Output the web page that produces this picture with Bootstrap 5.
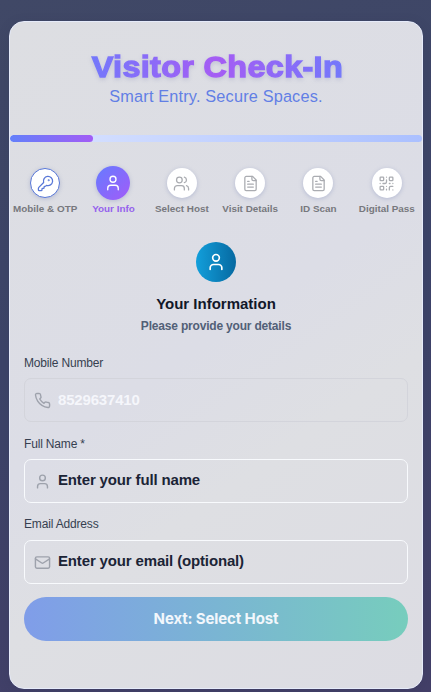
<!DOCTYPE html>
<html lang="en">
<head>
<meta charset="utf-8">
<meta name="viewport" content="width=device-width, initial-scale=1">
<title>Visitor Check-In</title>
<link rel="stylesheet" href="https://cdn.jsdelivr.net/npm/bootstrap@5.3.0/dist/css/bootstrap.min.css">
<style>
body{font-family:"Liberation Sans",Arial,sans-serif;background:linear-gradient(165deg,#404866 0%,#3c4469 45%,#433f68 100%);height:692px;overflow:hidden;padding:21px 8px 3px 9px}
svg{fill:none;stroke:currentColor;stroke-width:2;stroke-linecap:round;stroke-linejoin:round;display:block}
.panel{height:668px;border:1px solid #e6ebfa;border-radius:15px;background:linear-gradient(145deg,#dddee2,#dcdde6 48%,#dedfe3 65%,#dcdce3);box-shadow:0 3px 12px #2b305033}
.title{font-size:30px;line-height:36px;font-weight:700;letter-spacing:.3px;margin-top:27px;padding:0 0 0 2px;transform:scaleX(1.08);background:linear-gradient(90deg,#7378fb,#a55cf4 50%,#7378fb);-webkit-background-clip:text;background-clip:text;color:transparent;-webkit-text-stroke:1.3px transparent;filter:drop-shadow(0 2px 2px #5b60a033)}
.tagline{font-size:16.3px;line-height:24px;color:#627fe5;letter-spacing:.17px;margin-top:-1px}
.track{height:7px;border-radius:4px;margin-top:27px;background:linear-gradient(90deg,#dce5ff,#abc0ff);--bs-progress-bg:transparent}
.track .fillbar{background:linear-gradient(90deg,#6380fa,#a25cf5);border-radius:4px}
.steps{margin:24px 1px 0}
.step{width:68.5px;font-size:9.9px;line-height:12px;font-weight:700;color:#77787d;white-space:nowrap}
.holder{height:34px}
.dot{width:30px;height:30px;border-radius:50%;background:#fff;color:#aaacb1;box-shadow:0 1px 4px #7b88b766}
.dot svg{stroke-width:1.8}
.done .dot{color:#5877d7;border:1px solid #5877d7}
.now{color:#9561ed}
.now .dot{width:34px;height:34px;color:#fff;background:linear-gradient(135deg,#667bff,#a25bf8)}
.step .cap{margin-top:3px}
.hero{width:40px;height:40px;background:linear-gradient(90deg,#129fdb,#0669a1);color:#fff;margin-top:27px}
.heading{font-size:15px;line-height:20px;margin-top:12px;color:#111729}
.sub{font-size:12px;line-height:16px;margin-top:4px;color:#526077;letter-spacing:-.19px}
.fields{padding:0 14px;margin-top:21px}
.lab{font-size:12px;line-height:16px;color:#363f50;margin-bottom:7px;letter-spacing:-.17px}
.lab.tight{margin-top:-1px;margin-bottom:8px}
.box{height:44px;border:1px solid #f8fafd;border-radius:7px;padding-left:9px;gap:7px;color:#9ea2ac;margin-bottom:14px}
.box svg{stroke-width:2}
.box .form-control{font-size:15px;line-height:20px;font-weight:700;color:#1b2436;letter-spacing:-.15px;margin-bottom:2px}
.box .form-control::placeholder{color:#1b2436;opacity:1}
.box.locked{border-color:#d3d4db}
.box .form-control:disabled{color:#f5f6fb;-webkit-text-fill-color:#f5f6fb;background:transparent;letter-spacing:-.18px;margin-bottom:0}
.go{height:44px;border:0;border-radius:22px;background:linear-gradient(90deg,#809de9,#7ab5d3 50%,#77cdbd);color:#f2f7fc;font:700 15px Inter,sans-serif;letter-spacing:-.13px;margin-top:-1px;padding:0 0 1px}
</style>
</head>
<body>
<svg width="0" height="0" class="position-absolute"><defs>
<symbol id="user" viewBox="0 0 24 24"><circle cx="12" cy="7" r="4"/><path d="M19 21v-2a4 4 0 0 0-4-4H9a4 4 0 0 0-4 4v2"/></symbol>
<symbol id="file" viewBox="0 0 24 24"><path d="M15 2H6a2 2 0 0 0-2 2v16a2 2 0 0 0 2 2h12a2 2 0 0 0 2-2V7Z"/><path d="M14 2v4a2 2 0 0 0 2 2h4M10 9H8M16 13H8M16 17H8"/></symbol>
</defs></svg>
<main class="panel d-flex flex-column">
<h1 class="title text-center mb-0 align-self-center">Visitor Check-In</h1>
<p class="tagline text-center mb-0">Smart Entry. Secure Spaces.</p>
<div class="progress track"><div class="progress-bar fillbar" style="width:20.1%"></div></div>
<div class="steps d-flex">
<div class="step done d-flex flex-column align-items-center"><div class="holder d-flex align-items-center"><div class="dot d-flex align-items-center justify-content-center"><svg width="17" height="17" viewBox="0 0 24 24"><path d="M2.586 17.414A2 2 0 0 0 2 18.828V21a1 1 0 0 0 1 1h3a1 1 0 0 0 1-1v-1a1 1 0 0 1 1-1h1a1 1 0 0 0 1-1v-1a1 1 0 0 1 1-1h.172a2 2 0 0 0 1.414-.586l.814-.814a6.5 6.5 0 1 0-4-4z"/><circle cx="16.5" cy="7.5" r=".5"/></svg></div></div><span class="cap">Mobile &amp; OTP</span></div>
<div class="step now d-flex flex-column align-items-center"><div class="holder d-flex align-items-center"><div class="dot d-flex align-items-center justify-content-center"><svg width="18" height="18"><use href="#user"/></svg></div></div><span class="cap">Your Info</span></div>
<div class="step d-flex flex-column align-items-center"><div class="holder d-flex align-items-center"><div class="dot d-flex align-items-center justify-content-center"><svg width="17" height="17" viewBox="0 0 24 24"><circle cx="9" cy="7" r="4"/><path d="M16 21v-2a4 4 0 0 0-4-4H6a4 4 0 0 0-4 4v2M22 21v-2a4 4 0 0 0-3-3.87M16 3.13a4 4 0 0 1 0 7.75"/></svg></div></div><span class="cap">Select Host</span></div>
<div class="step d-flex flex-column align-items-center"><div class="holder d-flex align-items-center"><div class="dot d-flex align-items-center justify-content-center"><svg width="17" height="17"><use href="#file"/></svg></div></div><span class="cap">Visit Details</span></div>
<div class="step d-flex flex-column align-items-center"><div class="holder d-flex align-items-center"><div class="dot d-flex align-items-center justify-content-center"><svg width="17" height="17"><use href="#file"/></svg></div></div><span class="cap">ID Scan</span></div>
<div class="step d-flex flex-column align-items-center"><div class="holder d-flex align-items-center"><div class="dot d-flex align-items-center justify-content-center"><svg width="17" height="17" viewBox="0 0 24 24"><rect width="5" height="5" x="3" y="3" rx="1"/><rect width="5" height="5" x="16" y="3" rx="1"/><rect width="5" height="5" x="3" y="16" rx="1"/><path d="M21 16h-3a2 2 0 0 0-2 2v3M21 21v.01M12 7v3a2 2 0 0 1-2 2H7M3 12h.01M12 3h.01M12 16v.01M16 12h1M21 12v.01M12 21v-1"/></svg></div></div><span class="cap">Digital Pass</span></div>
</div>
<div class="hero rounded-circle align-self-center d-flex align-items-center justify-content-center"><svg width="20" height="20"><use href="#user"/></svg></div>
<h2 class="heading fw-bold text-center mb-0">Your Information</h2>
<p class="sub fw-bold text-center mb-0">Please provide your details</p>
<form class="fields d-flex flex-column">
<label class="lab" for="phone">Mobile Number</label>
<div class="box locked d-flex align-items-center"><svg class="flex-shrink-0" width="17" height="17" viewBox="0 0 24 24"><path d="M22 16.92v3a2 2 0 0 1-2.18 2 19.79 19.79 0 0 1-8.63-3.07 19.5 19.5 0 0 1-6-6 19.79 19.79 0 0 1-3.07-8.67A2 2 0 0 1 4.11 2h3a2 2 0 0 1 2 1.72 12.84 12.84 0 0 0 .7 2.81 2 2 0 0 1-.45 2.11L8.09 9.91a16 16 0 0 0 6 6l1.27-1.27a2 2 0 0 1 2.11-.45 12.84 12.84 0 0 0 2.81.7A2 2 0 0 1 22 16.92z"/></svg><input id="phone" class="form-control border-0 bg-transparent p-0" value="8529637410" disabled></div>
<label class="lab" for="full">Full Name *</label>
<div class="box d-flex align-items-center"><svg class="flex-shrink-0" width="17" height="17"><use href="#user"/></svg><input id="full" class="form-control border-0 bg-transparent p-0" placeholder="Enter your full name"></div>
<label class="lab tight" for="mail">Email Address</label>
<div class="box d-flex align-items-center"><svg class="flex-shrink-0" width="17" height="17" viewBox="0 0 24 24"><rect width="20" height="16" x="2" y="4" rx="2"/><path d="m22 7-8.97 5.7a1.94 1.94 0 0 1-2.06 0L2 7"/></svg><input id="mail" class="form-control border-0 bg-transparent p-0" placeholder="Enter your email (optional)"></div>
<button type="button" class="btn go w-100">Next: Select Host</button>
</form>
</main>
<script src="https://cdn.jsdelivr.net/npm/bootstrap@5.3.0/dist/js/bootstrap.bundle.min.js"></script>
</body>
</html>
